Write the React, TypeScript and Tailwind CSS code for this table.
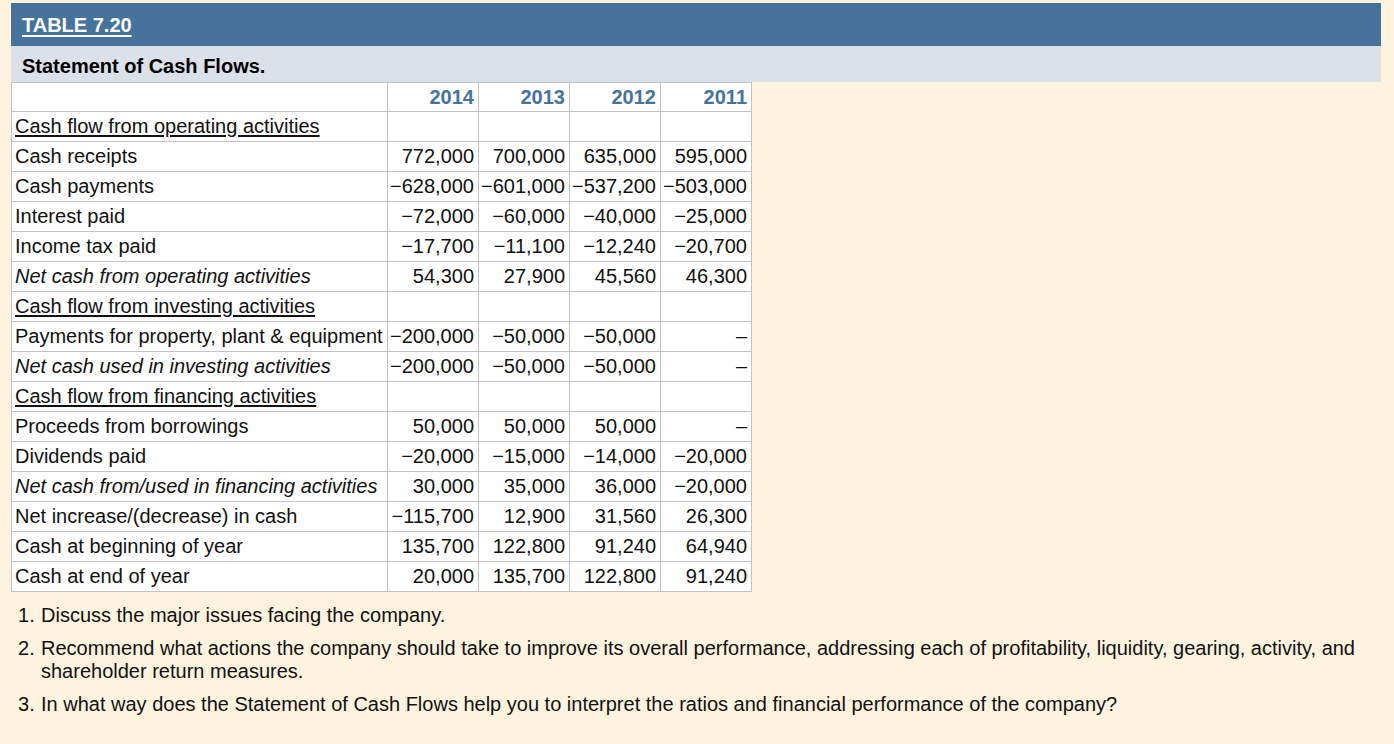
const years = ['2014', '2013', '2012', '2011']

type Row = {
    label: string
    values?: string[]
    kind?: 'section' | 'italic'
}

const rows: Row[] = [
    { label: 'Cash flow from operating activities', kind: 'section' },
    { label: 'Cash receipts', values: ['772,000', '700,000', '635,000', '595,000'] },
    { label: 'Cash payments', values: ['−628,000', '−601,000', '−537,200', '−503,000'] },
    { label: 'Interest paid', values: ['−72,000', '−60,000', '−40,000', '−25,000'] },
    { label: 'Income tax paid', values: ['−17,700', '−11,100', '−12,240', '−20,700'] },
    { label: 'Net cash from operating activities', values: ['54,300', '27,900', '45,560', '46,300'], kind: 'italic' },
    { label: 'Cash flow from investing activities', kind: 'section' },
    { label: 'Payments for property, plant & equipment', values: ['−200,000', '−50,000', '−50,000', '–'] },
    { label: 'Net cash used in investing activities', values: ['−200,000', '−50,000', '−50,000', '–'], kind: 'italic' },
    { label: 'Cash flow from financing activities', kind: 'section' },
    { label: 'Proceeds from borrowings', values: ['50,000', '50,000', '50,000', '–'] },
    { label: 'Dividends paid', values: ['−20,000', '−15,000', '−14,000', '−20,000'] },
    { label: 'Net cash from/used in financing activities', values: ['30,000', '35,000', '36,000', '−20,000'], kind: 'italic' },
    { label: 'Net increase/(decrease) in cash', values: ['−115,700', '12,900', '31,560', '26,300'] },
    { label: 'Cash at beginning of year', values: ['135,700', '122,800', '91,240', '64,940'] },
    { label: 'Cash at end of year', values: ['20,000', '135,700', '122,800', '91,240'] },
]

const questions = [
    'Discuss the major issues facing the company.',
    'Recommend what actions the company should take to improve its overall performance, addressing each of profitability, liquidity, gearing, activity, and shareholder return measures.',
    'In what way does the Statement of Cash Flows help you to interpret the ratios and financial performance of the company?',
]

export default function App() {
    return (
        <div className="min-h-screen bg-[#fef3df] pt-[3px] pl-[11px] pr-[13px] pb-6 text-[20px] text-[#111] font-['Liberation_Sans',Arial,sans-serif]">
            {/* caption */}
            <div className="h-[43px] bg-[#45739b] flex items-center px-[11px]">
                <span className="font-bold text-[20px] text-white underline underline-offset-[3px]">
                    TABLE 7.20
                </span>
            </div>
            <div className="h-[36px] bg-[#dce0e9] flex items-center px-[11px] pt-[4px]">
                <span className="font-bold text-[20px] text-black">Statement of Cash Flows.</span>
            </div>

            <table className="border-collapse bg-white w-[740px] table-fixed leading-none">
                <colgroup>
                    <col className="w-[376px]" />
                    <col className="w-[91px]" />
                    <col className="w-[91px]" />
                    <col className="w-[91px]" />
                    <col className="w-[91px]" />
                </colgroup>
                <thead>
                    <tr className="h-[29px]">
                        <th className="border border-[#c3c3c3]" />
                        {years.map(y => (
                            <th
                                key={y}
                                className="border border-[#c3c3c3] text-right pr-[4px] pb-[1px] font-bold text-[#46729b]"
                            >
                                {y}
                            </th>
                        ))}
                    </tr>
                </thead>
                <tbody>
                    {rows.map(row => (
                        <tr key={row.label} className="h-[30px]">
                            <td
                                className={
                                    'border border-[#c3c3c3] pl-[3px] pb-[2px] whitespace-nowrap ' +
                                    (row.kind === 'section' ? 'underline underline-offset-[2px] ' : '') +
                                    (row.kind === 'italic' ? 'italic' : '')
                                }
                            >
                                {row.label}
                            </td>
                            {years.map((y, i) => (
                                <td key={y} className="border border-[#c3c3c3] text-right pr-[4px] pb-[2px] whitespace-nowrap">
                                    {row.values ? row.values[i] : ''}
                                </td>
                            ))}
                        </tr>
                    ))}
                </tbody>
            </table>

            {/* questions */}
            <ol className="mt-[12px] pl-[7px] pr-[8px] flex flex-col gap-[10px] leading-[23px]">
                {questions.map((q, i) => (
                    <li key={i} className="flex">
                        <span className="w-[23px] shrink-0">{i + 1}.</span>
                        <span>{q}</span>
                    </li>
                ))}
            </ol>
        </div>
    )
}
